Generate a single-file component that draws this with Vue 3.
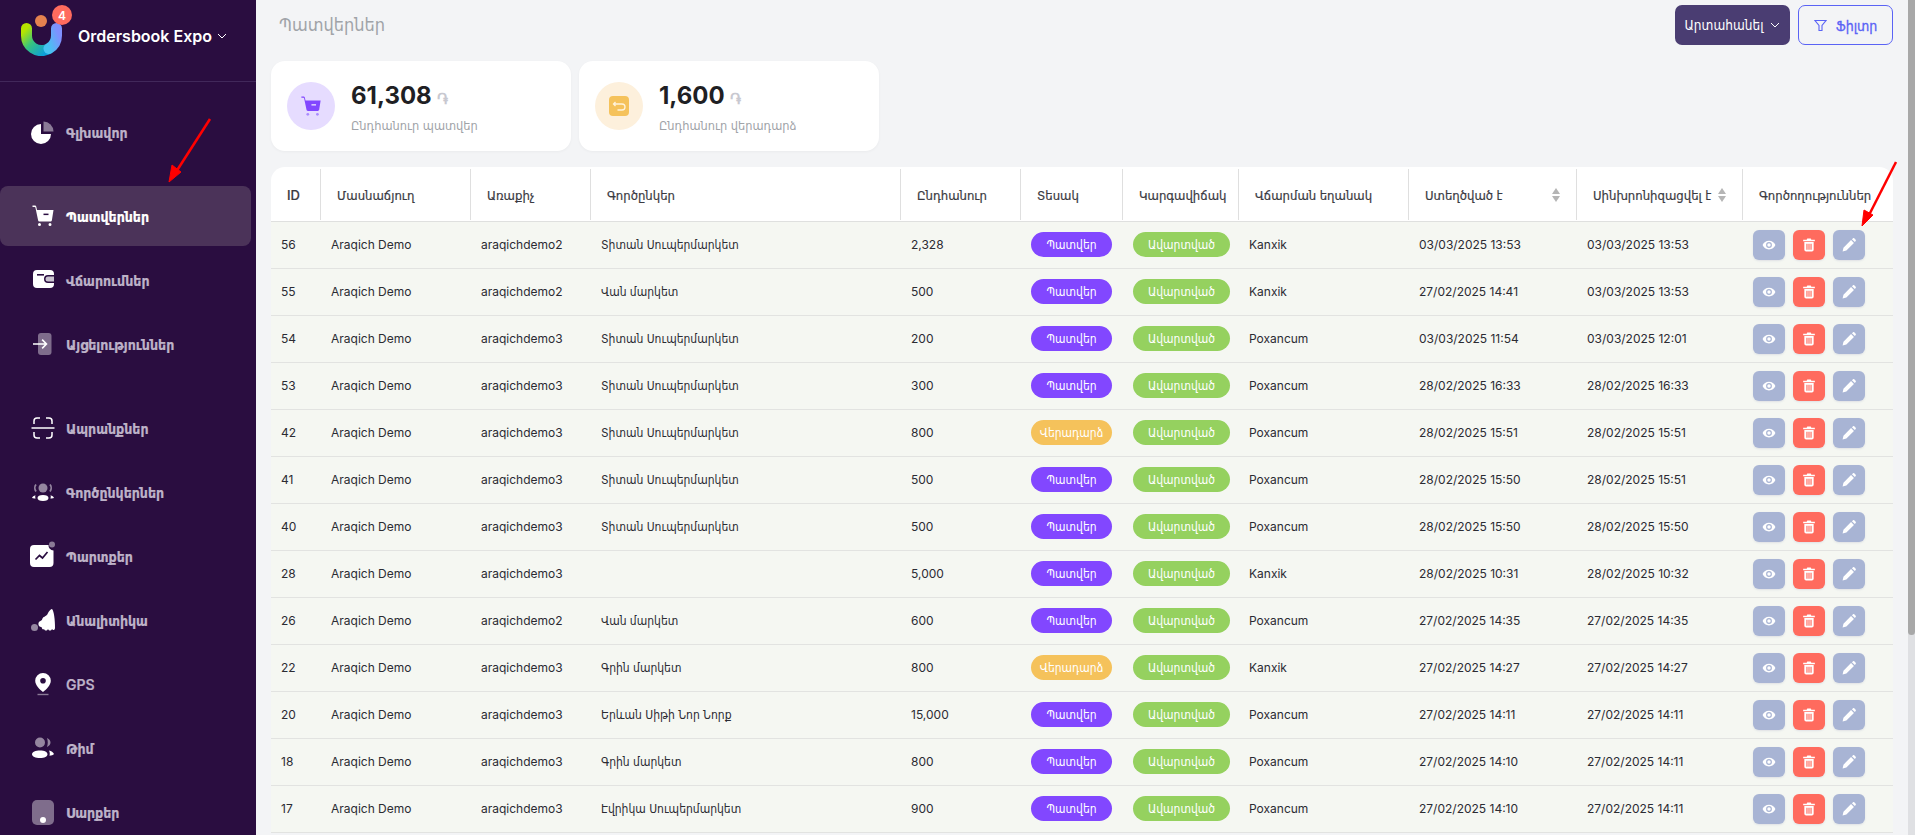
<script setup>
const bg = '#2a0d40'
const menu = [
  { label: 'Գլխավոր', paths: [
    { d: 'M10 4v10h10a10 10 0 1 1-10-10z' },
    { d: 'M12.5 1.5a10 10 0 0 1 10 10h-10z', o: .45 } ] },
  { label: 'Պատվերներ', active: true, gap: true, paths: [
    { d: 'M1.5 1.5h2.2c.8 0 1.4.5 1.6 1.3L6 6h16.5l-1.6 10.2c-.1.8-.8 1.3-1.5 1.3H8.6c-.8 0-1.4-.6-1.5-1.3L4.4 3.4c0-.3-.3-.5-.6-.5H1.5z' },
    { d: 'M12.5 9.6h5v1.500h-5z', f: bg },
    { d: 'M7 20.500a1.500 1.500 0 1 0 3 0 1.500 1.500 0 1 0-3 0zM17.500 20.500a1.500 1.500 0 1 0 3 0 1.500 1.500 0 1 0-3 0z' } ] },
  { label: 'Վճարումներ', paths: [
    { d: 'M6 2h13a4 4 0 0 1 4 4v1h-6a4 4 0 0 0 0 8h6v1a4 4 0 0 1-4 4H6a4 4 0 0 1-4-4V6a4 4 0 0 1 4-4z' },
    { d: 'M17 8.500h6v5h-6a2.500 2.500 0 0 1 0-5z', o: .75 },
    { d: 'M6 6h7v1.600H6z', f: bg } ] },
  { label: 'Այցելություններ', paths: [
    { d: 'M10 1h7.500a3 3 0 0 1 3 3v16a3 3 0 0 1-3 3H10a3 3 0 0 1-3-3V4a3 3 0 0 1 3-3z', o: .4 },
    { d: 'M2 11.200h11.600l-3-3 1.100-1.100 4.900 4.900-4.900 4.900-1.100-1.100 3-3H2z' } ] },
  { label: 'Ապրանքներ', gap: true, paths: [
    { d: 'M3 8V5a3 3 0 0 1 3-3h3M15 2h3a3 3 0 0 1 3 3v3M3 16v3a3 3 0 0 0 3 3h3M15 22h3a3 3 0 0 0 3-3v-3', s: 1.5 },
    { d: 'M.5 12h23', s: 1.5 } ] },
  { label: 'Գործընկերներ', paths: [
    { d: 'M7.500 8a4.500 4.500 0 1 0 9 0 4.500 4.500 0 1 0-9 0z', o: .5 },
    { d: 'M5 4.500c-1.500 1.800-1.500 5 0 7M19 4.500c1.500 1.800 1.500 5 0 7', s: 1.8, o: .5 },
    { d: 'M12 15c3.500 0 5.500 1.300 5.500 3s-2 3-5.500 3-5.500-1.300-5.500-3 2-3 5.500-3z' },
    { d: 'M1 18c.5-1.500 1.800-2.400 3.500-2.800-.4 1-.4 2 .1 3.200C3 18.500 2 18.500 1 18zM23 18c-.5-1.500-1.800-2.400-3.500-2.800.4 1 .4 2-.1 3.200 1.600.1 2.600.1 3.600-.4z' } ] },
  { label: 'Պարտքեր', paths: [
    { d: 'M3 1h14.500a5 5 0 0 0 5 5.500V19a4 4 0 0 1-4 4H3a4 4 0 0 1-4-4V5a4 4 0 0 1 4-4z' },
    { d: 'M4.500 15.500l4-4 3 2.500 5-6', s: 1.7, c: bg },
    { d: 'M18 .5a3 3 0 1 0 6 0 3 3 0 1 0-6 0z', o: .45 } ] },
  { label: 'Անալիտիկա', paths: [
    { d: 'M13 9C14 8 16 8 17 5 18 3 20 1 21 1 23 3 24 12 24 20 24 22 22 23 21 21 20 23 18 23 17 21 16 23 14 23 13 21 12 22 11 21 10.500 19 9 19 7 18 7.500 15 8 13 10 13 11 12 11 11 12 9 13 9z' },
    { d: 'M0 19.500a3.500 3.500 0 1 0 7 0 3.500 3.500 0 1 0-7 0z', o: .5 } ] },
  { label: 'GPS', paths: [
    { fr: 'evenodd', d: 'M12 1a7.800 7.800 0 0 1 7.800 7.800c0 4.500-4.800 9-7.800 11.200-3-2.200-7.800-6.700-7.800-11.200A7.800 7.800 0 0 1 12 1zm0 5a2.800 2.800 0 1 0 0 5.600A2.800 2.800 0 0 0 12 6z' },
    { d: 'M6.500 22.500h11', s: 1.4, o: .45 } ] },
  { label: 'Թիմ', paths: [
    { d: 'M4 6.500a5 5 0 1 0 10 0 5 5 0 1 0-10 0z', o: .5 },
    { d: 'M16 2c2.500 1 3.500 3 3.500 4.500S18.500 10 16 11c1-3 1-6 0-9z', o: .5 },
    { d: 'M9 14.500c4.500 0 7.500 1.500 7.500 3.700S13.500 22 9 22 1 20.500 1 18.200s3.500-3.700 8-3.700z' },
    { d: 'M18 14.500c2.500.5 4 1.500 5 3.500-1 1-2.500 1.500-4.500 1.700.5-1.800.3-3.700-.5-5.200z' } ] },
  { label: 'Սարքեր', paths: [
    { d: 'M6 0h12a5 5 0 0 1 5 5v15a5 5 0 0 1-5 5H6a5 5 0 0 1-5-5V5a5 5 0 0 1 5-5z', o: .4 },
    { d: 'M9 20a3 3 0 1 0 6 0 3 3 0 1 0-6 0z' } ] }
]

const columns = [
  { label: 'ID', w: 50 }, { label: 'Մասնաճյուղ', w: 150 }, { label: 'Առաքիչ', w: 120 },
  { label: 'Գործընկեր', w: 310 }, { label: 'Ընդհանուր', w: 120 }, { label: 'Տեսակ', w: 102 },
  { label: 'Կարգավիճակ', w: 116 }, { label: 'Վճարման եղանակ', w: 170 },
  { label: 'Ստեղծված է', w: 168, sort: true }, { label: 'Սինխրոնիզացվել է', w: 166, sort: true },
  { label: 'Գործողություններ', w: 150 }
]

const T = 'Տիտան Սուպերմարկետ', V = 'Վան մարկետ', G = 'Գրին մարկետ'
const rows = [
  [56, 2, T, '2,328', 0, 'Kanxik', '03/03/2025 13:53', '03/03/2025 13:53'],
  [55, 2, V, '500', 0, 'Kanxik', '27/02/2025 14:41', '03/03/2025 13:53'],
  [54, 3, T, '200', 0, 'Poxancum', '03/03/2025 11:54', '03/03/2025 12:01'],
  [53, 3, T, '300', 0, 'Poxancum', '28/02/2025 16:33', '28/02/2025 16:33'],
  [42, 3, T, '800', 1, 'Poxancum', '28/02/2025 15:51', '28/02/2025 15:51'],
  [41, 3, T, '500', 0, 'Poxancum', '28/02/2025 15:50', '28/02/2025 15:51'],
  [40, 3, T, '500', 0, 'Poxancum', '28/02/2025 15:50', '28/02/2025 15:50'],
  [28, 3, '', '5,000', 0, 'Kanxik', '28/02/2025 10:31', '28/02/2025 10:32'],
  [26, 2, V, '600', 0, 'Poxancum', '27/02/2025 14:35', '27/02/2025 14:35'],
  [22, 3, G, '800', 1, 'Kanxik', '27/02/2025 14:27', '27/02/2025 14:27'],
  [20, 3, 'Երևան Սիթի Նոր Նորք', '15,000', 0, 'Poxancum', '27/02/2025 14:11', '27/02/2025 14:11'],
  [18, 3, G, '800', 0, 'Poxancum', '27/02/2025 14:10', '27/02/2025 14:11'],
  [17, 3, 'Էվրիկա Սուպերմարկետ', '900', 0, 'Poxancum', '27/02/2025 14:10', '27/02/2025 14:11']
]
</script>

<template>
  <div class="layout">
    <aside class="sidebar">
      <div class="brand">
        <div class="logo">
          <svg width="41" height="41" viewBox="0 0 41 41">
            <defs>
              <linearGradient id="lg1" x1="0" y1="0" x2="1" y2="1">
                <stop offset="0" stop-color="#b6e400" />
                <stop offset=".45" stop-color="#37c47f" />
                <stop offset="1" stop-color="#0d9fd8" />
              </linearGradient>
              <linearGradient id="lg2" x1="1" y1="0" x2="0" y2="1">
                <stop offset="0" stop-color="#7f90ff" />
                <stop offset="1" stop-color="#46c4f2" />
              </linearGradient>
            </defs>
            <path d="M5.500 13.500V20.500A15 15 0 0 0 26 34.500" fill="none" stroke="url(#lg1)" stroke-width="11" stroke-linecap="round" />
            <path d="M35.500 13.500V20.500A15 15 0 0 1 28 33.500" fill="none" stroke="url(#lg2)" stroke-width="11" stroke-linecap="round" />
            <circle cx="20" cy="6" r="6" fill="#e5824f" />
          </svg>
          <span class="badge-count">4</span>
        </div>
        <span class="brand-name">Ordersbook Expo</span>
        <svg class="chev" width="10" height="6" viewBox="0 0 10 6"><path d="M1 1l4 4 4-4" fill="none" stroke="#fff" stroke-width="1" /></svg>
      </div>
      <nav class="menu">
        <a v-for="m in menu" :key="m.label" class="item" :class="{ active: m.active, gap: m.gap }">
          <svg class="ico" width="24" height="24" viewBox="0 0 24 24">
            <path v-for="(p, i) in m.paths" :key="i" :d="p.d" :fill="p.s ? 'none' : (p.f || '#fff')" :fill-rule="p.fr"
              :stroke="p.s ? (p.c || '#fff') : 'none'" :stroke-width="p.s" :opacity="p.o" />
          </svg>
          <span>{{ m.label }}</span>
        </a>
      </nav>
    </aside>

    <main class="main">
      <header class="topbar">
        <h1 class="title">Պատվերներ</h1>
        <div class="actions">
          <button class="btn-export">Արտահանել
            <svg width="10" height="6" viewBox="0 0 10 6"><path d="M1 1l4 4 4-4" fill="none" stroke="#fff" stroke-width="1" /></svg>
          </button>
          <button class="btn-filter">
            <svg width="13" height="13" viewBox="0 0 13 13"><path d="M1 1.500h11L8 6.500V11.500H5V6.500z" fill="none" stroke="#5a63f5" stroke-width="1.100" /></svg>
            Ֆիլտր
          </button>
        </div>
      </header>

      <section class="stats">
        <div class="stat">
          <div class="stat-ico purple">
            <svg width="22" height="22" viewBox="0 0 24 24">
              <path d="M1.500 1.500h2.200c.8 0 1.400.5 1.600 1.300L6 6h16.500l-1.600 10.200c-.1.800-.8 1.300-1.500 1.300H8.600c-.8 0-1.400-.6-1.500-1.300L4.400 3.400c0-.3-.3-.5-.6-.5H1.500z" fill="#8247ff" />
              <path d="M12.500 10h5v1.500h-5z" fill="#e9deff" />
              <circle cx="8.500" cy="21" r="1.500" fill="#a98bff" /><circle cx="19" cy="21" r="1.500" fill="#a98bff" />
            </svg>
          </div>
          <div class="stat-text">
            <div class="stat-num">61,308 <span class="dram">֏</span></div>
            <div class="stat-sub">Ընդհանուր պատվեր</div>
          </div>
        </div>
        <div class="stat">
          <div class="stat-ico orange">
            <svg width="20" height="20" viewBox="0 0 20 20">
              <rect width="20" height="20" rx="4" fill="#f5c25b" />
              <path d="M6 6.500l-2 2 2 2M4.500 8.500h8a3 3 0 0 1 0 6H8" transform="translate(.5 -.5)" fill="none" stroke="#fff3dc" stroke-width="1.300" />
            </svg>
          </div>
          <div class="stat-text">
            <div class="stat-num">1,600 <span class="dram">֏</span></div>
            <div class="stat-sub">Ընդհանուր վերադարձ</div>
          </div>
        </div>
      </section>

      <div class="table-card">
        <table class="table">
          <colgroup><col v-for="c in columns" :key="c.label" :style="{ width: c.w + 'px' }" /></colgroup>
          <thead>
            <tr>
              <th v-for="c in columns" :key="c.label">
                <div class="th-in">
                  <span>{{ c.label }}</span>
                  <span v-if="c.sort" class="sort"><i class="up"></i><i class="down"></i></span>
                </div>
              </th>
            </tr>
          </thead>
          <tbody>
            <tr v-for="r in rows" :key="r[0]">
              <td>{{ r[0] }}</td>
              <td>Araqich Demo</td>
              <td>araqichdemo{{ r[1] }}</td>
              <td>{{ r[2] }}</td>
              <td>{{ r[3] }}</td>
              <td><span class="pill" :class="r[4] ? 'ret' : 'ord'">{{ r[4] ? 'Վերադարձ' : 'Պատվեր' }}</span></td>
              <td><span class="pill done">Ավարտված</span></td>
              <td>{{ r[5] }}</td>
              <td>{{ r[6] }}</td>
              <td>{{ r[7] }}</td>
              <td>
                <div class="row-actions">
                  <button class="act blue" aria-label="view">
                    <svg width="14" height="14" viewBox="0 0 24 24"><path fill-rule="evenodd" d="M12 4.500C7 4.500 2.700 7.600 1 12c1.700 4.400 6 7.500 11 7.500s9.300-3.100 11-7.500c-1.700-4.400-6-7.500-11-7.500zM12 17a5 5 0 1 1 0-10 5 5 0 0 1 0 10z" fill="#fff" /><circle cx="12" cy="12" r="3" fill="#fff" /></svg>
                  </button>
                  <button class="act red" aria-label="delete">
                    <svg width="14" height="14" viewBox="0 0 24 24"><path fill-rule="evenodd" d="M9 1h6l1 2h6v2.500H2V3h6zM4 7h16v13a3 3 0 0 1-3 3H7a3 3 0 0 1-3-3zm3.500 3v10h2V10zm3.500 0v10h2V10zm3.500 0v10h2V10z" fill="#fff" /></svg>
                  </button>
                  <button class="act blue" aria-label="edit">
                    <svg width="14" height="14" viewBox="0 0 24 24"><path d="M1 23l1.500-6.500L15.500 3.500l5 5-13 13zM17 2l2-1.500c.8-.5 1.500-.4 2 0l2.500 2.500c.5.600.5 1.300 0 2L22 7z" fill="#fff" /></svg>
                  </button>
                </div>
              </td>
            </tr>
          </tbody>
        </table>
      </div>
    </main>

    <div class="scrollbar"><div class="thumb"></div></div>

    <svg class="annot" width="1915" height="835" viewBox="0 0 1915 835">
      <g stroke="#f00" fill="#f00">
        <path d="M210 119L176 172" stroke-width="2.500" fill="none" />
        <path d="M169 182L172 165 181 172z" stroke-width="1" />
        <path d="M1896 162L1868 217" stroke-width="2.500" fill="none" />
        <path d="M1862 226L1864 210 1873 215z" stroke-width="1" />
      </g>
    </svg>
  </div>
</template>

<style>
html, body { margin: 0; height: 100%; overflow: hidden; }
</style>

<style scoped>
.layout {
  position: relative;
  display: flex;
  height: 835px;
  overflow: hidden;
  background: #f3f4f6;
  font-family: Inter, "DejaVu Sans Condensed", "DejaVu Sans", sans-serif;
  color: #2b2b33;
}
.sidebar {
  flex: 0 0 256px;
  background: #2a0d40;
  overflow: hidden;
}
.brand {
  height: 82px;
  box-sizing: border-box;
  padding: 0 0 10px 21px;
  display: flex;
  align-items: center;
  border-bottom: 1px solid #41285a;
}
.logo { position: relative; width: 41px; height: 41px; margin-right: 16px; }
.badge-count {
  position: absolute;
  top: -10px;
  right: -10px;
  width: 20px;
  height: 20px;
  border-radius: 50%;
  background: #ff6b5e;
  color: #fff;
  font-size: 12px;
  font-weight: 600;
  display: flex;
  align-items: center;
  justify-content: center;
}
.brand-name { color: #fff; font-size: 16px; font-weight: 600; white-space: nowrap; }
.chev { margin-left: 5px; }
.menu { padding-top: 20px; }
.item {
  display: flex;
  align-items: center;
  gap: 11px;
  width: 251px;
  box-sizing: border-box;
  height: 60px;
  margin-bottom: 4px;
  padding-left: 31px;
  border-radius: 0 8px 8px 0;
  color: #bdb2c8;
  font-size: 14px;
  font-weight: 600;
  -webkit-text-stroke: .2px;
}
.item.gap { margin-top: 24px; }
.item.active { background: #4b3359; color: #fff; border-radius: 8px; }
.ico { flex: none; overflow: visible; }

.main { flex: 1; min-width: 0; padding: 0 15px; }
.topbar {
  height: 61px;
  box-sizing: border-box;
  display: flex;
  justify-content: space-between;
  align-items: flex-start;
  padding-top: 5px;
}
.title {
  margin: 0;
  padding: 9px 0 0 8px;
  font-size: 18px;
  font-weight: 400;
  color: #a0a3a8;
}
.actions { display: flex; gap: 8px; }
.btn-export, .btn-filter {
  height: 40px;
  box-sizing: border-box;
  border-radius: 7px;
  display: flex;
  align-items: center;
  font: inherit;
  font-size: 14px;
}
.btn-export {
  width: 115px;
  justify-content: center;
  gap: 7px;
  background: #4a3d72;
  border: 0;
  color: #fff;
  font-size: 13.500px;
}
.btn-filter {
  width: 95px;
  justify-content: center;
  gap: 9px;
  background: transparent;
  border: 1px solid #5a63f5;
  color: #5a63f5;
  -webkit-text-stroke: .3px;
}
.stats { display: flex; gap: 8px; }
.stat {
  width: 300px;
  height: 90px;
  box-sizing: border-box;
  background: #fff;
  border-radius: 14px;
  box-shadow: 0 1px 3px rgba(0, 0, 0, .04);
  display: flex;
  align-items: center;
  gap: 16px;
  padding-left: 16px;
}
.stat-ico {
  width: 48px;
  height: 48px;
  border-radius: 50%;
  display: flex;
  align-items: center;
  justify-content: center;
}
.purple { background: #e6dcff; }
.orange { background: #fdf0dc; }
.stat-text { padding-top: 2px; }
.stat-num { font-size: 24px; font-weight: 700; color: #1f1f24; line-height: 30px; white-space: nowrap; }
.dram { font-size: 15px; color: #c8c8d0; }
.stat-sub { font-size: 12.700px; color: #a0a3a8; margin-top: 4px; }

.table-card {
  margin-top: 16px;
  background: #fff;
  border-radius: 14px 14px 0 0;
  overflow: hidden;
}
.table {
  width: 100%;
  table-layout: fixed;
  border-collapse: collapse;
}
th {
  height: 53px;
  padding: 1px 0 0;
  text-align: left;
  font-size: 13px;
  font-weight: 500;
  color: #3a3a42;
  border-bottom: 1px solid #dfe0df;
  -webkit-text-stroke: .2px;
}
.th-in {
  height: 51px;
  box-sizing: border-box;
  padding: 0 16px;
  display: flex;
  align-items: center;
  justify-content: space-between;
  border-right: 1px solid #dfdfdf;
  white-space: nowrap;
}
th:last-child .th-in { border-right: 0; }
.sort { display: flex; flex-direction: column; gap: 2px; }
.sort i { display: block; width: 0; height: 0; border-left: 4px solid transparent; border-right: 4px solid transparent; }
.sort .up { border-bottom: 6px solid #b5b5b5; }
.sort .down { border-top: 6px solid #b5b5b5; }
td {
  height: 47px;
  padding: 0 0 1px 10px;
  box-sizing: border-box;
  background: #f5f7f2;
  border-bottom: 1px solid #e2e3e1;
  font-size: 12px;
  color: #2b2b33;
  white-space: nowrap;
}
.pill {
  display: inline-flex;
  align-items: center;
  justify-content: center;
  height: 25px;
  border-radius: 13px;
  color: #fff;
  font-size: 12px;
  vertical-align: middle;
}
.ord, .ret { width: 81px; }
.ord { background: #8247ff; }
.ret { background: #f5c25b; }
.done { width: 97px; background: #95d15f; }
.row-actions { display: flex; gap: 8px; }
.act {
  width: 32px;
  height: 30px;
  border: 0;
  padding: 0;
  border-radius: 6px;
  display: flex;
  align-items: center;
  justify-content: center;
  box-shadow: 0 1px 2px rgba(100, 110, 160, .15);
}
.blue { background: #a8b4d4; }
.red { background: #ff6b5e; }
.scrollbar { flex: 0 0 7px; background: #dfe0e3; }
.thumb { height: 635px; background: #a8a8a8; border-radius: 0 0 4px 4px; }
.annot { position: absolute; inset: 0; pointer-events: none; }
</style>
